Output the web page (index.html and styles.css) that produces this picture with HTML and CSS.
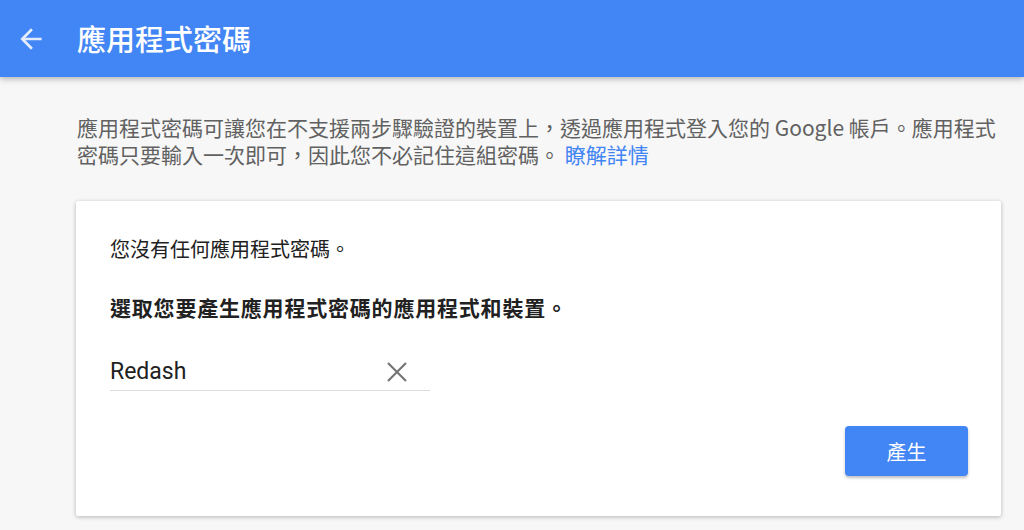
FILE: index.html
```html
<!DOCTYPE html>
<html lang="zh-Hant">
<head>
<meta charset="utf-8">
<link rel="stylesheet" href="styles.css">
</head>
<body>
<header class="topbar">
  <span class="back" aria-label="返回">
    <svg width="32" height="32" viewBox="0 0 24 24"><path d="M20 11H7.83l5.59-5.59L12 4l-8 8 8 8 1.41-1.41L7.83 13H20v-2z" fill="#fff"/></svg>
  </span>
  <h1 class="title">應用程式密碼</h1>
</header>
<main class="content">
  <p class="desc">應用程式密碼可讓您在不支援兩步驟驗證的裝置上，透過應用程式登入您的 Google 帳戶。應用程式密碼只要輸入一次即可，因此您不必記住這組密碼。 <a class="link" href="#">瞭解詳情</a></p>
  <section class="card">
    <p class="none">您沒有任何應用程式密碼。</p>
    <p class="prompt">選取您要產生應用程式密碼的應用程式和裝置。</p>
    <div class="field">
      <span class="value">Redash</span>
      <span class="clear">
        <svg width="20" height="20" viewBox="0 0 20 20"><path d="M1 1L19 19M19 1L1 19" stroke="#757575" stroke-width="2.2" fill="none"/></svg>
      </span>
    </div>
    <div class="actions">
      <button class="btn">產生</button>
    </div>
  </section>
</main>
</body>
</html>
```
FILE: styles.css
```css
html, body {
  margin: 0;
  padding: 0;
}
body {
  background: #f7f7f7;
  font-family: "Noto Sans CJK TC", "Noto Sans", sans-serif;
  width: 1024px;
  height: 530px;
  overflow: hidden;
}
.topbar {
  height: 77px;
  background: #4285f4;
  display: flex;
  align-items: center;
  box-shadow: 0 2px 6px rgba(0,0,0,0.28);
  position: relative;
}
.back {
  display: flex;
  margin-left: 15px;
  opacity: 0.85;
}
.title {
  margin: 0 0 0 30px;
  color: #fff;
  font-size: 29px;
  font-weight: 500;
  line-height: 1;
}
.content {
  margin-left: 76px;
  width: 925px;
  padding-top: 37px;
}
.desc {
  margin: 0;
  font-size: 21px;
  line-height: 27px;
  color: #616161;
  padding-left: 1px;
}
.link {
  color: #4285f4;
  text-decoration: none;
}
.card {
  margin-top: 33px;
  background: #fff;
  height: 315px;
  box-sizing: border-box;
  padding: 34px 33px 0 34px;
  box-shadow: 0 1px 4px rgba(0,0,0,0.28);
  border-radius: 2px;
}
.none, .prompt {
  margin: 0;
  font-size: 20px;
  line-height: 28px;
  color: #212121;
}
.prompt {
  margin-top: 30px;
  font-size: 21px;
  font-weight: 700;
  letter-spacing: 0.8px;
}
.field {
  margin-top: 36px;
  width: 320px;
  display: flex;
  align-items: center;
  justify-content: space-between;
  border-bottom: 1px solid #dcdcdc;
  padding-bottom: 3px;
}
.value {
  font-family: Roboto, "Noto Sans", sans-serif;
  font-size: 23px;
  line-height: 30px;
  color: #212121;
}
.clear {
  display: flex;
  margin-right: 23px;
}
.actions {
  display: flex;
  justify-content: flex-end;
  margin-top: 35px;
}
.btn {
  width: 123px;
  height: 50px;
  background: #4285f4;
  color: #fff;
  border: none;
  border-radius: 4px;
  font-family: "Noto Sans CJK TC", sans-serif;
  font-size: 20px;
  box-shadow: 0 2px 3px rgba(0,0,0,0.25);
  padding: 0;
}
```
